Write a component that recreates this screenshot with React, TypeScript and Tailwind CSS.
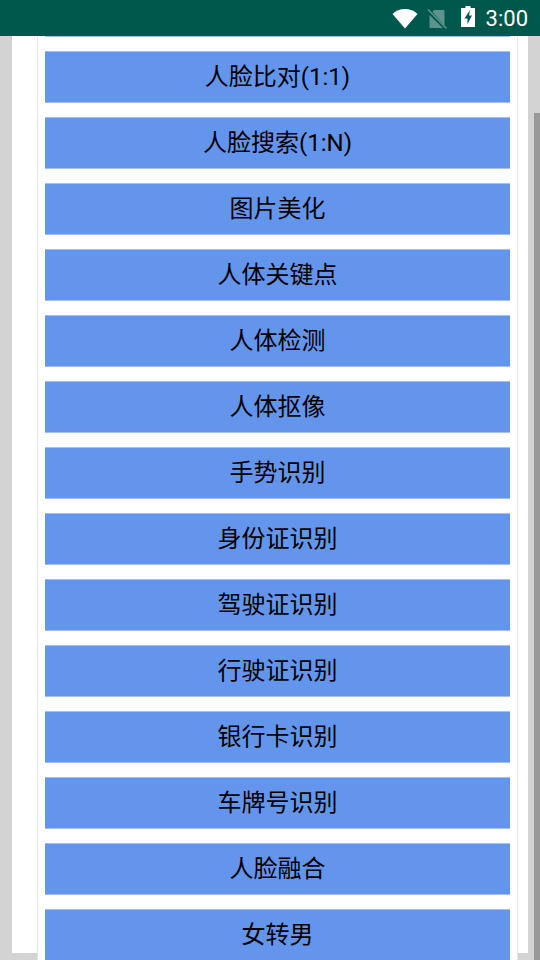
const items = [
  "人脸比对(1:1)",
  "人脸搜索(1:N)",
  "图片美化",
  "人体关键点",
  "人体检测",
  "人体抠像",
  "手势识别",
  "身份证识别",
  "驾驶证识别",
  "行驶证识别",
  "银行卡识别",
  "车牌号识别",
  "人脸融合",
  "女转男",
];

function StatusBar() {
  return (
    <div className="h-9 shrink-0 bg-[#00574b] flex items-center justify-end pr-[12px]">
      {/* wifi */}
      <svg width="26" height="21" viewBox="0 0 26 21" className="mt-[1px]">
        <path d="M0.500 6C4 2.800 8.200 1 13 1s9 1.800 12.500 5L13 20.500z" fill="#fff" />
      </svg>
      {/* no sim */}
      <svg width="20" height="20" viewBox="0 0 20 20" className="ml-[9px] mt-[1px]">
        <path d="M7 1h9.500a1 1 0 0 1 1 1v14.500L5.500 3z M2.500 6V18a1 1 0 0 0 1 1h12.500z" fill="#fff" fillOpacity="0.36" />
        <path d="M1 0.500L19.500 19.500" stroke="#fff" strokeOpacity="0.36" strokeWidth="1.500" />
      </svg>
      {/* battery charging */}
      <svg width="14" height="21" viewBox="0 0 14 21" className="ml-[14px] mb-[3px]">
        <path d="M4.500 0h5v2H14v19H0V2h4.500z" fill="#fff" />
        <path d="M9 4L3.500 12.500h3V18L11 9.500H8z" fill="#00574b" />
      </svg>
      <span className="ml-[11px] text-[22px] text-white font-['Roboto',sans-serif]">3:00</span>
    </div>
  );
}

export default function App() {
  return (
    <div className="relative h-[960px] w-[540px] overflow-hidden bg-[#d3d3d3] flex flex-col">
      <StatusBar />
      <div className="flex-1 min-h-0 px-3 pb-[7px]">
        <div className="h-full bg-white">
          <div className="h-[924px] ml-[25px] mr-[10px] border-x border-[#dde6f8] bg-white px-[7px] overflow-hidden">
            <div className="flex flex-col gap-[14px] -mt-[15px]">
              <div className="h-[16px] shrink-0 bg-[#6495ed] border-b border-[#a3bff4]" />
              {items.map((item) => (
                <button
                  key={item}
                  className="h-[52px] shrink-0 bg-[#6495ed] border-y border-[#a3bff4] text-[24px] text-black font-['Roboto','Noto_Sans_CJK_SC',sans-serif] flex items-center justify-center"
                >
                  {item}
                </button>
              ))}
            </div>
          </div>
        </div>
      </div>
      {/* scrollbar thumb */}
      <div className="absolute right-0 top-[113px] bottom-0 w-[6px] bg-[#999999]" />
    </div>
  );
}
